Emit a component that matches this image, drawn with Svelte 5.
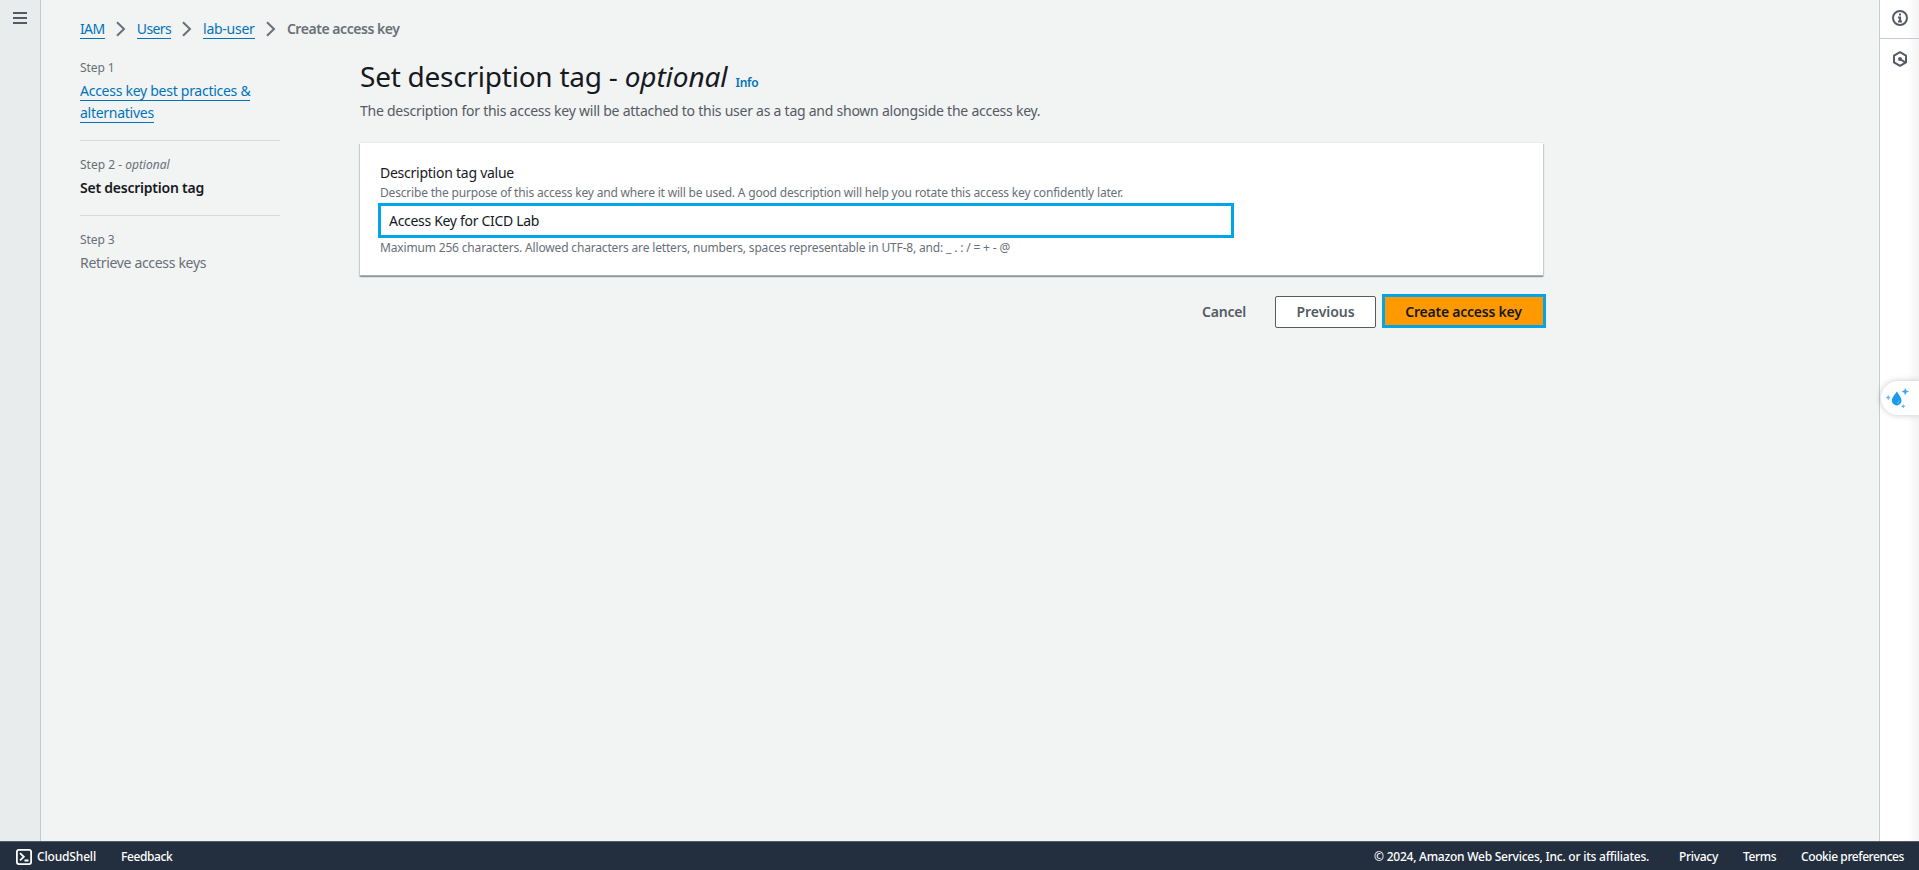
<script>
  const crumbs = [
    { label: 'IAM', width: 24.5 },
    { label: 'Users', width: 34 },
    { label: 'lab-user', width: 51.5 },
  ];
</script>

<div class="app">
  <div class="body">
    <nav class="side">
      <svg width="14" height="12" viewBox="0 0 14 12" fill="#545b64"><path d="M0 0h14v2H0zM0 5h14v2H0zM0 10h14v2H0z" /></svg>
    </nav>

    <main class="content">
      <div class="crumbs">
        {#each crumbs as c, i}
          <span class="slot" style="width: {c.width}px"><a href="#top" class="link c{i}">{c.label}</a></span>
          <svg class="chev" width="10" height="16" viewBox="0 0 10 16" fill="none" stroke="#687078" stroke-width="2"><path d="M1 1.2L8 8 1 14.8" /></svg>
        {/each}
        <span class="here">Create access key</span>
      </div>

      <div class="columns">
        <aside class="steps">
          <section>
            <div class="num">Step 1</div>
            <div class="title"><a href="#step1" class="link">Access key best practices &amp;<br />alternatives</a></div>
          </section>
          <section>
            <div class="num two">Step 2 - <i>optional</i></div>
            <div class="title active">Set description tag</div>
          </section>
          <section>
            <div class="num">Step 3</div>
            <div class="title muted">Retrieve access keys</div>
          </section>
        </aside>

        <div class="form">
          <h1><span>Set description tag - <i>optional</i></span><a href="#info" class="info">Info</a></h1>
          <p class="lead">The description for this access key will be attached to this user as a tag and shown alongside the access key.</p>
          <div class="card">
            <label for="tag">Description tag value</label>
            <div class="hint">Describe the purpose of this access key and where it will be used. A good description will help you rotate this access key confidently later.</div>
            <input id="tag" value="Access Key for CICD Lab" />
            <div class="hint limit">Maximum 256 characters. Allowed characters are letters, numbers, spaces representable in UTF-8, and: _ . : / = + - @</div>
          </div>
          <div class="actions">
            <button class="cancel">Cancel</button>
            <button class="previous">Previous</button>
            <button class="create">Create access key</button>
          </div>
        </div>
      </div>
    </main>

    <aside class="rail">
      <div class="tool first">
        <svg width="16" height="16" viewBox="0 0 16 16" fill="none" stroke="#545b64" stroke-width="2"><circle cx="8" cy="8" r="7" /><path d="M7 4.500h2M6 7.500h2.100v3.500M6 11.500h4" /></svg>
      </div>
      <div class="tool second">
        <svg width="16" height="16" viewBox="0 0 16 16" fill="none" stroke="#545b64" stroke-width="2"><path d="M8 1.200l6 3.400v6.800l-6 3.400-6-3.400V4.600z" stroke-linejoin="round" /><path d="M8 8l5.500 3.600" /><circle cx="8" cy="8" r="2" fill="#545b64" stroke="none" /></svg>
      </div>
    </aside>
  </div>

  <footer>
    <svg class="shell" width="16" height="16" viewBox="0 0 16 16" fill="none" stroke="#fff" stroke-width="1.8"><rect x="0.9" y="0.9" width="14.2" height="14.2" rx="2" /><path d="M4 4.200l3.800 3.600L4 11.400M8.500 11.500h4" /></svg>
    <span class="cloud">CloudShell</span>
    <span class="feed">Feedback</span>
    <span class="copy">© 2024, Amazon Web Services, Inc. or its affiliates.</span>
    <span class="priv">Privacy</span>
    <span class="terms">Terms</span>
    <span class="cook">Cookie preferences</span>
  </footer>

  <div class="bubble">
    <svg width="24" height="24" viewBox="0 0 24 24">
      <path d="M10.800 4.500c1.700 3 4.700 5.700 4.700 9.200a4.800 4.800 0 0 1-9.600 0c0-3.500 3.200-6.200 4.900-9.200z" fill="#1a9bec" />
      <path d="M13.100 13.500c0 1.500-.7 2.500-2 2.900" stroke="#7cc8f7" stroke-width="1" fill="none" />
      <path d="M19.200 1.500l1 2.200 2.300.8-2.300.9-1 2.300-.9-2.300-2.300-.9 2.300-.8z" fill="#35a9ef" stroke="#35a9ef" stroke-width=".5" />
      <path d="M2.200 8.500l.6 1.500 1.600.6-1.600.6-.6 1.500-.6-1.500-1.400-.6 1.400-.6z" fill="#4db5f2" stroke="#4db5f2" stroke-width=".4" />
      <path d="M17.200 17.500l.6 1.300 1.300.5-1.300.5-.6 1.300-.5-1.300-1.300-.5 1.300-.5z" fill="#4db5f2" stroke="#4db5f2" stroke-width=".4" />
    </svg>
  </div>
</div>

<style>
  :global(body) { margin: 0; overflow: hidden; }
  .app {
    position: relative;
    display: flex;
    flex-direction: column;
    height: 870px;
    font: 14px/22px "Noto Sans", sans-serif;
    color: #16191f;
    background: #f2f3f3;
    white-space: nowrap;
  }
  .app * { box-sizing: border-box; }
  svg { display: block; flex: none; }
  .body { display: flex; height: 841px; }
  .side { width: 41px; padding: 12px 0 0 13px; background: #e9eced; border-right: 1px solid #c5cacc; }
  .content { flex: 1; padding: 18px 0 0 39px; }
  .rail {
    width: 40px;
    background: linear-gradient(90deg, #fff 70%, #f3f3f3);
    border-left: 1px solid #c5cbd0;
  }
  .tool { display: flex; padding-left: 12px; }
  .first { height: 39px; padding-top: 10px; border-bottom: 1px solid #c5cbd0; }
  .second { padding-top: 12px; }

  .link { color: #0073bb; text-decoration: none; border-bottom: 1px solid #0073bb; letter-spacing: -0.27px; }
  .crumbs { display: flex; height: 22px; }
  .slot { display: block; }
  .slot .link { display: block; height: 21px; }
  .link.c0 { letter-spacing: -0.63px; }
  .link.c1 { letter-spacing: -0.6px; }
  .chev { margin: 3px 11px 0 11.3px; }
  .here { font-weight: 600; color: #687078; letter-spacing: -0.45px; }

  .columns { display: flex; gap: 80px; padding-top: 20px; }
  .steps { width: 200px; }
  section { padding-bottom: 16px; }
  section + section { padding-top: 16px; border-top: 1px solid #d5dbdb; }
  .num { font-size: 12px; line-height: 16px; margin-bottom: 4px; color: #687078; letter-spacing: -0.1px; }
  .two { letter-spacing: 0; }
  .active { font-weight: 600; letter-spacing: -0.23px; }
  .muted { color: #687078; letter-spacing: -0.32px; }

  .form { width: 1183px; margin-top: -1px; }
  h1 { display: flex; align-items: baseline; margin: 0; font-size: 28px; line-height: 34px; font-weight: 400; letter-spacing: -0.24px; }
  h1 i { letter-spacing: -0.1px; }
  .info { margin-left: 8px; font-size: 12px; font-weight: 600; color: #0073bb; text-decoration: none; letter-spacing: -0.25px; }
  .lead { margin: 0 0 21px; color: #545b64; letter-spacing: -0.245px; }
  .card {
    height: 133px;
    padding: 19px 18px 0 20px;
    background: #fff;
    box-shadow: 0 1px 1px 0 rgba(0, 28, 36, .2), 1px 1px 1px 0 rgba(0, 28, 36, .15), -1px 1px 1px 0 rgba(0, 28, 36, .15), 0 -1px 0 #e9ecec;
    border-bottom: 1px solid #a9b3b7;
  }
  label { display: block; letter-spacing: -0.25px; }
  .hint { font-size: 12px; line-height: 16px; color: #687078; letter-spacing: -0.185px; }
  label + .hint { margin: 1px 0 2px; }
  input {
    display: block;
    width: 856px;
    height: 35px;
    margin-left: -2px;
    padding: 0 8px;
    border: 3px solid #00a4e8;
    border-radius: 0;
    background: #fff;
    color: #16191f;
    font: inherit;
    letter-spacing: -0.31px;
  }
  .limit { margin-top: 2px; letter-spacing: -0.165px; }

  .actions { display: flex; justify-content: flex-end; align-items: flex-end; margin: 18px -3px 0 0; height: 34px; }
  button { height: 32px; margin: 0; padding: 0; background: none; border: 0; font: 600 14px/22px "Noto Sans", sans-serif; color: #545b64; }
  .cancel { width: 84px; margin-right: 9px; letter-spacing: -0.2px; }
  .previous { width: 101px; margin-right: 6px; background: #fff; border: 1px solid #545b64; border-radius: 2px; letter-spacing: -0.05px; }
  .create { width: 164px; height: 34px; padding: 2px 1px 0 0; background: #ff9900; border: 3px solid #00a4e8; color: #16191f; letter-spacing: -0.23px; }

  footer {
    display: flex;
    align-items: center;
    height: 29px;
    padding-left: 16px;
    border-top: 1px solid #545b64;
    background: #232f3e;
    color: #fff;
    font-size: 12px;
    line-height: 16px;
    font-weight: 500;
    padding-top: 1px;
  }
  .shell { margin-right: 5px; }
  .cloud { width: 84px; letter-spacing: -0.165px; }
  .feed { letter-spacing: -0.4px; }
  .copy { margin-left: auto; width: 305px; letter-spacing: -0.237px; }
  .priv { width: 64px; letter-spacing: -0.29px; }
  .terms { width: 58px; letter-spacing: -0.4px; }
  .cook { width: 118px; letter-spacing: -0.413px; }

  .bubble {
    position: absolute;
    right: 0;
    top: 381px;
    width: 38px;
    height: 34px;
    padding: 6px 0 0 5px;
    border-radius: 17px 0 0 17px;
    background: #fff;
    box-shadow: 0 0 6px rgba(0, 0, 0, .22);
  }
</style>
